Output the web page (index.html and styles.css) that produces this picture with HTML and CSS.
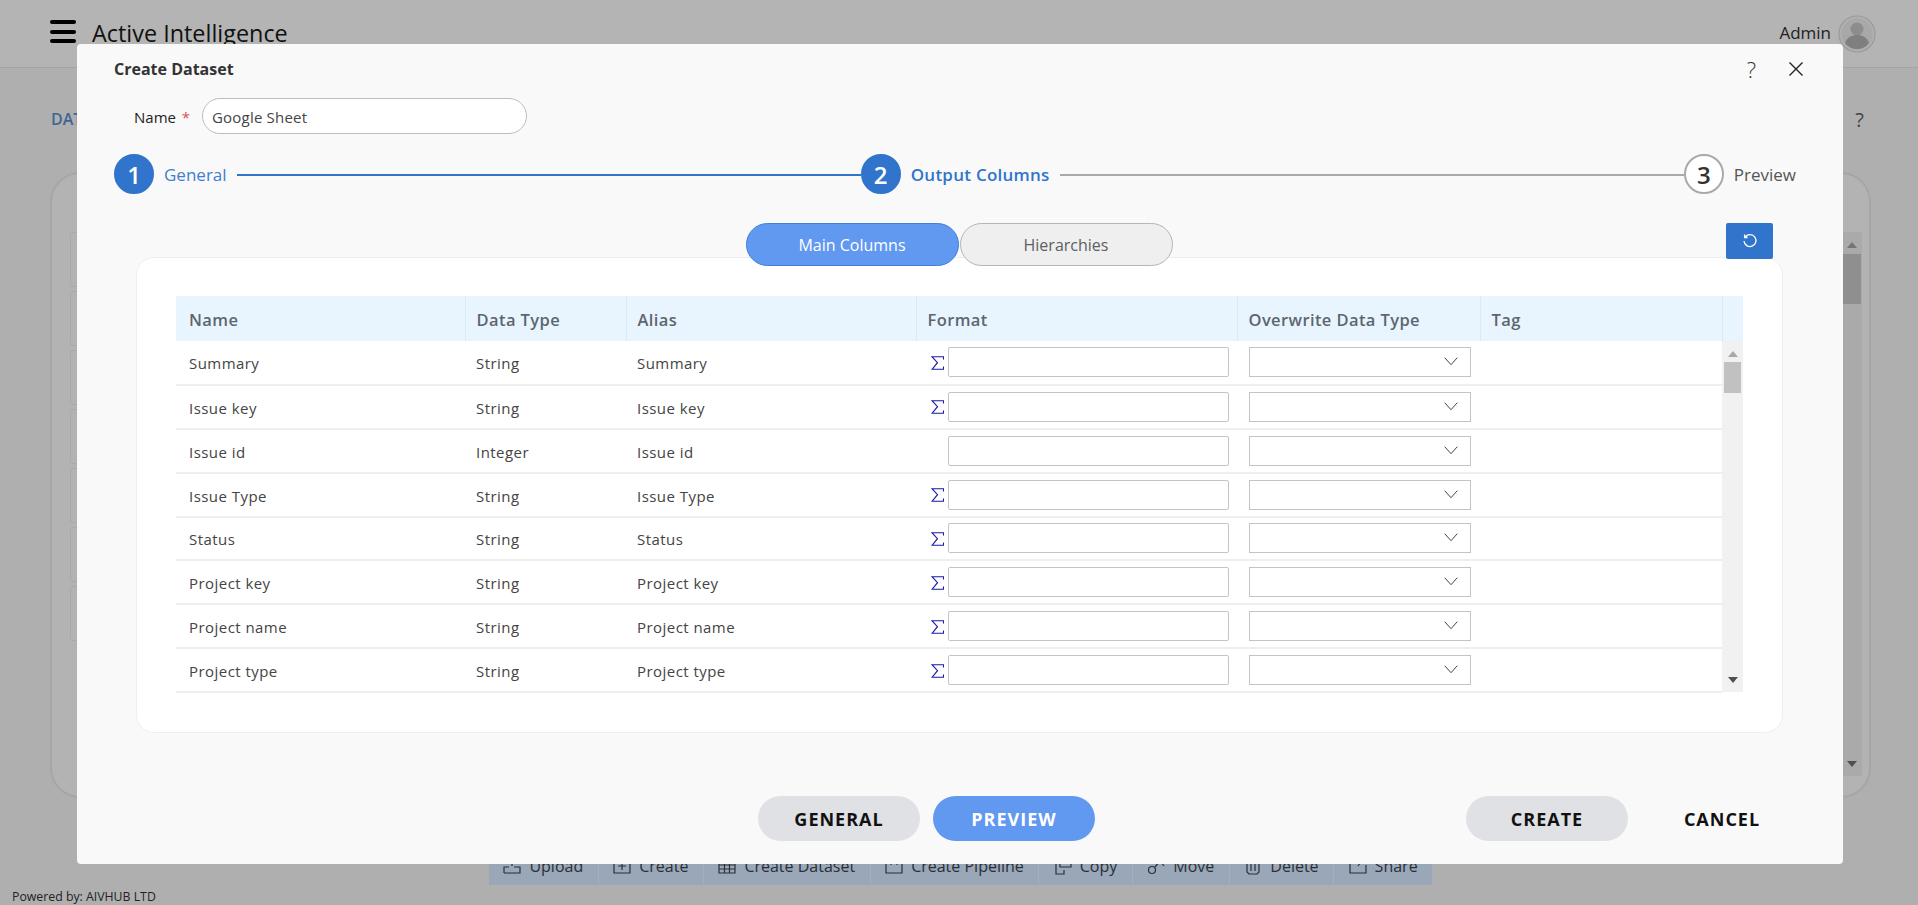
FILE: index.html
```html
<!DOCTYPE html>
<html lang="en">
<head>
    <meta charset="UTF-8">
    <meta name="viewport" content="width=device-width, initial-scale=1.0">
    <title>Create Dataset</title>
    <link rel="stylesheet" href="styles.css">
</head>
<body>
    <!-- page behind the dialog -->
    <header class="app-header">
        <div class="hamburger"><span></span><span></span><span></span></div>
        <div class="app-title">Active Intelligence</div>
        <div class="user-name">Admin</div>
        <svg class="avatar" viewBox="0 0 38 38">
            <circle cx="19" cy="19" r="18" fill="#b0b0b0" stroke="#9b9b9b" stroke-width="1.2"/>
            <circle cx="19" cy="19" r="15.5" fill="#a8a8a8"/>
            <circle cx="19" cy="14" r="6.5" fill="#8d8d8d"/>
            <path d="M7 28c2-6 7-8 12-8s10 2 12 8c-3 4-7 6-12 6s-9-2-12-6z" fill="#7f7f7f"/>
        </svg>
    </header>

    <main class="app-main">
        <div class="page-head">
            <span class="page-title">DATASETS</span>
            <span class="page-help">?</span>
        </div>
        <div class="card">
            <div class="card-list">
                <div class="card-row"></div>
                <div class="card-row"></div>
                <div class="card-row"></div>
                <div class="card-row"></div>
                <div class="card-row"></div>
                <div class="card-row"></div>
                <div class="card-row"></div>
            </div>
            <div class="card-scroll">
                <span class="arrow-up dark"></span>
                <span class="card-thumb"></span>
                <span class="arrow-down dark"></span>
            </div>
        </div>
    </main>

    <div class="toolbar">
        <div class="tool">
            <svg viewBox="0 0 18 18"><path d="M1 16V10h5M9 9V3M7 5l2-2 2 2M11 10h6v6H1"/></svg>
            Upload
        </div>
        <div class="tool">
            <svg viewBox="0 0 18 18"><path d="M1 2h16v14H1zM9 5v8M5 9h8"/></svg>
            Create
        </div>
        <div class="tool">
            <svg viewBox="0 0 18 18"><path d="M1 3h16v13H1zM1 8h16M1 12h16M6.500 3v13M11.500 3v13"/></svg>
            Create Dataset
        </div>
        <div class="tool">
            <svg viewBox="0 0 18 18"><path d="M1 3v13h16V3M6 2v6M12 2v6"/></svg>
            Create Pipeline
        </div>
        <div class="tool">
            <svg viewBox="0 0 18 18"><path d="M6 1h11v9H6zM2 5v12h8v-4"/></svg>
            Copy
        </div>
        <div class="tool">
            <svg viewBox="0 0 18 18"><circle cx="5" cy="13" r="3.500"/><path d="M8 10l5-6 4 5"/></svg>
            Move
        </div>
        <div class="tool">
            <svg viewBox="0 0 18 18"><path d="M3 2h12v13l-2 2H5l-2-2zM7 5v9M11 5v9"/></svg>
            Delete
        </div>
        <div class="tool">
            <svg viewBox="0 0 18 18"><path d="M1 3v13h16V8M9 9l5-7M10 2h4v4"/></svg>
            Share
        </div>
    </div>

    <footer class="app-footer">Powered by: AIVHUB LTD</footer>

    <!-- dialog -->
    <div class="modal">
        <div class="modal-head">
            <div class="modal-title">Create Dataset</div>
            <span class="modal-help">?</span>
            <svg class="modal-close" viewBox="0 0 16 16"><path d="M1.500 1.500l13 13M14.500 1.500l-13 13"/></svg>
        </div>

        <div class="name-row">
            <label class="name-label">Name <span class="required">*</span></label>
            <input class="name-input" type="text" value="Google Sheet">
        </div>

        <div class="stepper">
            <span class="step-num active">1</span>
            <span class="step-label done">General</span>
            <span class="step-line active"></span>
            <span class="step-num active">2</span>
            <span class="step-label current">Output Columns</span>
            <span class="step-line"></span>
            <span class="step-num">3</span>
            <span class="step-label">Preview</span>
        </div>

        <div class="tabs-row">
            <div class="tabs">
                <div class="tab selected">Main Columns</div>
                <div class="tab">Hierarchies</div>
            </div>
            <button class="reset-btn">
                <svg viewBox="0 0 16 16"><path d="M3.300 3.800A6 6 0 1 1 2 8M2.600 1.500v3h3"/></svg>
            </button>
        </div>

        <div class="panel">
            <table class="columns-table">
                <colgroup>
                    <col class="col-name"><col class="col-type"><col class="col-alias">
                    <col class="col-format"><col class="col-over"><col class="col-tag"><col class="col-bar">
                </colgroup>
                <thead>
                    <tr>
                        <th>Name</th>
                        <th>Data Type</th>
                        <th>Alias</th>
                        <th>Format</th>
                        <th>Overwrite Data Type</th>
                        <th>Tag</th>
                        <th></th>
                    </tr>
                </thead>
                <tbody>
                    <tr>
                        <td>Summary</td><td>String</td><td>Summary</td>
                        <td><div class="format-cell"><svg class="sigma" viewBox="0 0 13 14"><path d="M12.500 3.500V.7H1l5.500 6-5.500 6.600h11.500v-2.800"/></svg><input class="format-input" type="text"></div></td>
                        <td><div class="select-wrap"><select class="type-select"></select><svg class="chevron" viewBox="0 0 14 9"><path d="M.7.7L7 7.700 13.300.7"/></svg></div></td>
                        <td></td>
                        <td class="bar-cell" rowspan="8">
                            <div class="scrollbar">
                                <span class="arrow-up"></span>
                                <span class="thumb"></span>
                                <span class="arrow-down"></span>
                            </div>
                        </td>
                    </tr>
                    <tr>
                        <td>Issue key</td><td>String</td><td>Issue key</td>
                        <td><div class="format-cell"><svg class="sigma" viewBox="0 0 13 14"><path d="M12.500 3.500V.7H1l5.500 6-5.500 6.600h11.500v-2.800"/></svg><input class="format-input" type="text"></div></td>
                        <td><div class="select-wrap"><select class="type-select"></select><svg class="chevron" viewBox="0 0 14 9"><path d="M.7.7L7 7.700 13.300.7"/></svg></div></td>
                        <td></td>
                    </tr>
                    <tr>
                        <td>Issue id</td><td>Integer</td><td>Issue id</td>
                        <td><div class="format-cell"><span class="sigma"></span><input class="format-input" type="text"></div></td>
                        <td><div class="select-wrap"><select class="type-select"></select><svg class="chevron" viewBox="0 0 14 9"><path d="M.7.7L7 7.700 13.300.7"/></svg></div></td>
                        <td></td>
                    </tr>
                    <tr>
                        <td>Issue Type</td><td>String</td><td>Issue Type</td>
                        <td><div class="format-cell"><svg class="sigma" viewBox="0 0 13 14"><path d="M12.500 3.500V.7H1l5.500 6-5.500 6.600h11.500v-2.800"/></svg><input class="format-input" type="text"></div></td>
                        <td><div class="select-wrap"><select class="type-select"></select><svg class="chevron" viewBox="0 0 14 9"><path d="M.7.7L7 7.700 13.300.7"/></svg></div></td>
                        <td></td>
                    </tr>
                    <tr>
                        <td>Status</td><td>String</td><td>Status</td>
                        <td><div class="format-cell"><svg class="sigma" viewBox="0 0 13 14"><path d="M12.500 3.500V.7H1l5.500 6-5.500 6.600h11.500v-2.800"/></svg><input class="format-input" type="text"></div></td>
                        <td><div class="select-wrap"><select class="type-select"></select><svg class="chevron" viewBox="0 0 14 9"><path d="M.7.7L7 7.700 13.300.7"/></svg></div></td>
                        <td></td>
                    </tr>
                    <tr>
                        <td>Project key</td><td>String</td><td>Project key</td>
                        <td><div class="format-cell"><svg class="sigma" viewBox="0 0 13 14"><path d="M12.500 3.500V.7H1l5.500 6-5.500 6.600h11.500v-2.800"/></svg><input class="format-input" type="text"></div></td>
                        <td><div class="select-wrap"><select class="type-select"></select><svg class="chevron" viewBox="0 0 14 9"><path d="M.7.7L7 7.700 13.300.7"/></svg></div></td>
                        <td></td>
                    </tr>
                    <tr>
                        <td>Project name</td><td>String</td><td>Project name</td>
                        <td><div class="format-cell"><svg class="sigma" viewBox="0 0 13 14"><path d="M12.500 3.500V.7H1l5.500 6-5.500 6.600h11.500v-2.800"/></svg><input class="format-input" type="text"></div></td>
                        <td><div class="select-wrap"><select class="type-select"></select><svg class="chevron" viewBox="0 0 14 9"><path d="M.7.7L7 7.700 13.300.7"/></svg></div></td>
                        <td></td>
                    </tr>
                    <tr>
                        <td>Project type</td><td>String</td><td>Project type</td>
                        <td><div class="format-cell"><svg class="sigma" viewBox="0 0 13 14"><path d="M12.500 3.500V.7H1l5.500 6-5.500 6.600h11.500v-2.800"/></svg><input class="format-input" type="text"></div></td>
                        <td><div class="select-wrap"><select class="type-select"></select><svg class="chevron" viewBox="0 0 14 9"><path d="M.7.7L7 7.700 13.300.7"/></svg></div></td>
                        <td></td>
                    </tr>
                </tbody>
            </table>
        </div>

        <div class="modal-foot">
            <button class="pill">GENERAL</button>
            <button class="pill primary">PREVIEW</button>
            <button class="pill push">CREATE</button>
            <button class="pill plain">CANCEL</button>
        </div>
    </div>
</body>
</html>
```

FILE: styles.css
```css
* {
    box-sizing: border-box;
}

body {
    margin: 0;
    height: 100vh;
    display: flex;
    flex-direction: column;
    overflow: hidden;
    background: #afafaf;
    color: #1a1a1a;
    font-family: "Open Sans", "Noto Sans", sans-serif;
}

/* page behind the dialog */

.app-header {
    height: 68px;
    flex: none;
    display: flex;
    align-items: flex-start;
    padding: 20px 42px 0 50px;
    background: #b4b4b4;
    border-bottom: 1px solid #a3a3a3;
}

.hamburger {
    width: 26px;
    height: 23px;
    display: flex;
    flex-direction: column;
    justify-content: space-between;
}

.hamburger span {
    height: 4px;
    border-radius: 2px;
    background: #000;
}

.app-title {
    margin: -2px 0 0 16px;
    font-size: 23.4px;
    line-height: 30px;
    color: #111;
}

.user-name {
    margin: 1px 7px 0 auto;
    font-size: 17px;
    line-height: 24px;
    color: #222;
}

.avatar {
    width: 38px;
    height: 38px;
    margin-top: -5px;
}

.app-main {
    flex: 1;
    min-height: 0;
    padding: 0 47px 0 50px;
    display: flex;
    flex-direction: column;
}

.page-head {
    height: 104px;
    flex: none;
    display: flex;
    justify-content: space-between;
    align-items: center;
    padding-bottom: 2px;
}

.page-title {
    margin-left: 1px;
    font-size: 16px;
    font-weight: 600;
    color: #3e6596;
}

.page-help {
    font-size: 20px;
    color: #444;
    margin-right: 7px;
}

.card {
    height: 626px;
    flex: none;
    position: relative;
    border: 2px solid #a6a6a6;
    border-radius: 30px;
    background: #b3b3b3;
    display: flex;
    justify-content: space-between;
    padding: 58px 7px 20px 18px;
}

.card-list {
    width: 100px;
    display: flex;
    flex-direction: column;
    gap: 4px;
    overflow: hidden;
}

.card-row {
    height: 55px;
    flex: none;
    border: 1px solid #a9a9a9;
    border-radius: 3px;
}

.card-scroll {
    width: 20px;
    margin-top: 0;
    display: flex;
    flex-direction: column;
    align-items: center;
    background: #aaaaaa;
}

.card-thumb {
    width: 100%;
    height: 50px;
    margin-top: 6px;
    margin-left: -2px;
    background: #8f8f8f;
}

.arrow-up,
.arrow-down {
    width: 0;
    height: 0;
    flex: none;
    border-left: 5px solid transparent;
    border-right: 5px solid transparent;
}

.arrow-up {
    margin-top: 10px;
    border-bottom: 6px solid #a8a8a8;
}

.arrow-down {
    margin-top: auto;
    margin-bottom: 9px;
    border-top: 6px solid #505050;
}

.arrow-up.dark {
    border-bottom-color: #757575;
}

.toolbar {
    height: 37px;
    flex: none;
    display: flex;
    justify-content: center;
    padding-left: 4px;
    font-size: 16px;
    color: #2b2f36;
}

.tool {
    height: 37px;
    display: flex;
    align-items: center;
    gap: 8px;
    padding: 0 14.5px 2px;
    background: #99a7b9;
    border-right: 1px solid #a3b0c0;
}

.tool svg {
    width: 18px;
    height: 18px;
    fill: none;
    stroke: #2b2f36;
    stroke-width: 1.2;
}

.app-footer {
    height: 20px;
    flex: none;
    padding-left: 12px;
    font-size: 12.3px;
    line-height: 24px;
    color: #222;
}

/* dialog */

.modal {
    position: fixed;
    left: 77px;
    top: 44px;
    width: 1766px;
    height: 820px;
    padding: 0 47px 0 37px;
    background: #f9f9f9;
    border-radius: 4px;
}

.modal-head {
    height: 50px;
    display: flex;
    align-items: center;
}

.modal-title {
    margin-right: auto;
    font-size: 16px;
    font-weight: 700;
    color: #333;
}

.modal-help {
    font-size: 22px;
    font-weight: 300;
    color: #333;
    margin-right: 32px;
}

.modal-close {
    width: 16px;
    height: 16px;
    margin-right: -8px;
    fill: none;
    stroke: #222;
    stroke-width: 1.4;
}

.name-row {
    height: 36px;
    margin-top: 4px;
    padding-left: 20px;
    display: flex;
    align-items: center;
}

.name-label {
    width: 68px;
    flex: none;
    padding-top: 2px;
    font-size: 15px;
    color: #222;
}

.required {
    color: #e05050;
    margin-left: 2px;
}

.name-input {
    width: 325px;
    height: 36px;
    padding: 2px 9px 0;
    font: 15px "Open Sans", "Noto Sans", sans-serif;
    letter-spacing: .2px;
    color: #444;
    background: #fff;
    border: 1px solid #bdbdbd;
    border-radius: 18px;
}

.stepper {
    height: 40px;
    margin-top: 20px;
    display: flex;
    align-items: center;
}

.step-num {
    width: 40px;
    height: 40px;
    flex: none;
    display: flex;
    align-items: center;
    justify-content: center;
    border: 2px solid #a9a9a9;
    border-radius: 50%;
    background: #fff;
    font-size: 24px;
    font-weight: 600;
    color: #333;
}

.step-num.active {
    background: #3074cc;
    border-color: #3074cc;
    color: #fff;
}

.step-label {
    margin-left: 10px;
    font-size: 17px;
    color: #555;
    white-space: nowrap;
}

.step-label.done {
    color: #3f7ecf;
}

.step-label.current {
    color: #3074cc;
    font-weight: 600;
    letter-spacing: .25px;
}

.step-line {
    flex: 1;
    height: 2px;
    margin: 2px 0 0 10px;
    background: #a9a9a9;
}

.step-line.active {
    background: #3074cc;
}

.tabs-row {
    position: relative;
    z-index: 1;
    height: 43px;
    margin: 29px 23px -9px 31px;
    display: grid;
    grid-template-columns: 1fr auto 1fr;
}

.tabs {
    grid-column: 2;
    display: flex;
    gap: 1px;
}

.tab {
    width: 213px;
    height: 43px;
    display: flex;
    align-items: center;
    justify-content: center;
    padding-top: 1px;
    border: 1px solid #b5b5b5;
    border-radius: 22px;
    background: #efefef;
    font-size: 16px;
    color: #5e5e5e;
}

.tab.selected {
    background: #6198f0;
    border-color: #3f7fd8;
    color: #fff;
}

.reset-btn {
    grid-column: 3;
    justify-self: end;
    width: 47px;
    height: 36px;
    padding: 0;
    display: flex;
    align-items: center;
    justify-content: center;
    border: none;
    border-radius: 2px;
    background: #3074cc;
}

.reset-btn svg {
    width: 16px;
    height: 16px;
    fill: none;
    stroke: #fff;
    stroke-width: 1.3;
}

.panel {
    width: 1647px;
    height: 476px;
    margin-left: 22px;
    padding: 38px 39px 0 39px;
    background: #fff;
    border: 1px solid #eeeeee;
    border-radius: 18px;
}

.columns-table {
    width: 1567px;
    table-layout: fixed;
    border-collapse: collapse;
}

.col-name { width: 289px; }
.col-type { width: 161px; }
.col-alias { width: 290px; }
.col-format { width: 321px; }
.col-over { width: 243px; }
.col-tag { width: 242px; }
.col-bar { width: 21px; }

.columns-table th {
    height: 45px;
    padding: 2px 0 0 11px;
    text-align: left;
    font-size: 16.5px;
    font-weight: 600;
    letter-spacing: .4px;
    color: #5d6670;
    background: #e9f5fe;
    border-right: 1px solid #dce9f3;
}

.columns-table th:last-child {
    border-right: none;
}

.columns-table td {
    height: 43.875px;
    padding: 2px 0 0 11px;
    font-size: 15px;
    letter-spacing: .45px;
    color: #444;
    border-bottom: 2px solid #eeeeee;
}

.columns-table th:first-child,
.columns-table td:first-child {
    padding-left: 13px;
}

.columns-table td.bar-cell {
    padding: 0;
    border-bottom: none;
    vertical-align: top;
}

.format-cell {
    display: flex;
    align-items: center;
    margin: -2px 0 0 4px;
}

.sigma {
    width: 13px;
    height: 14px;
    flex: none;
    margin: 1px 4px 0 0;
    fill: none;
    stroke: #1a1aa8;
    stroke-width: 1.1;
}

.format-input {
    width: 281px;
    height: 30px;
    background: #fff;
    border: 1px solid #c4c4c4;
    border-radius: 2px;
}

.select-wrap {
    position: relative;
    width: 222px;
    margin: -2px 0 0 1px;
}

.type-select {
    display: block;
    width: 100%;
    height: 30px;
    appearance: none;
    background: #fff;
    border: 1px solid #c4c4c4;
    border-radius: 0;
}

.chevron {
    position: absolute;
    right: 13px;
    top: 10px;
    width: 14px;
    height: 9px;
    fill: none;
    stroke: #444;
    stroke-width: 1;
}

.scrollbar {
    height: 351px;
    display: flex;
    flex-direction: column;
    align-items: center;
    background: #f1f1f1;
}

.thumb {
    width: 17px;
    height: 31px;
    margin-top: 5px;
    background: #c1c1c1;
}

.modal-foot {
    height: 45px;
    margin: 63px -7px 0 644px;
    display: flex;
    gap: 13px;
}

.pill {
    width: 162px;
    height: 45px;
    padding: 0;
    border: none;
    border-radius: 23px;
    background: #dfe1e4;
    font: 700 18px "Open Sans", "Noto Sans", sans-serif;
    letter-spacing: 1px;
    color: #111;
}

.pill.primary {
    background: #6198f0;
    color: #fff;
}

.pill.push {
    margin-left: auto;
}

.pill.plain {
    background: none;
}
```
